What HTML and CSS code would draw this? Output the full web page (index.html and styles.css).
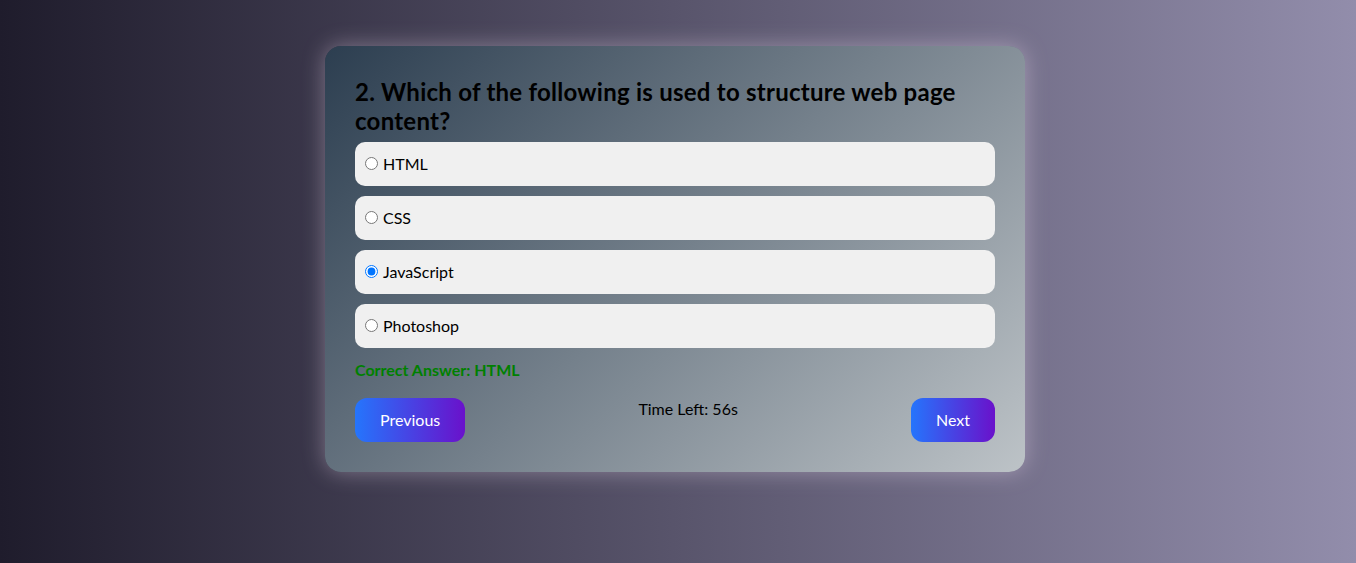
FILE: index.html
```html
<!DOCTYPE html>
<html lang="en">
<head>
<meta charset="utf-8">
<title>Quiz</title>
<link rel="stylesheet" href="styles.css">
</head>
<body>
<div class="quiz">
  <h2 class="question">2. Which of the following is used to structure web page content?</h2>
  <div class="options">
    <label class="option"><input type="radio" name="q"> HTML</label>
    <label class="option"><input type="radio" name="q"> CSS</label>
    <label class="option"><input type="radio" name="q" checked> JavaScript</label>
    <label class="option"><input type="radio" name="q"> Photoshop</label>
  </div>
  <p class="feedback">Correct Answer: HTML</p>
  <div class="controls">
    <button class="btn">Previous</button>
    <div class="timer">Time Left: 56s</div>
    <button class="btn">Next</button>
  </div>
</div>
</body>
</html>
```
FILE: styles.css
```css
html, body {
  margin: 0;
  height: 100%;
}
body {
  background: linear-gradient(to right, #1f1c2c, #928dab);
  font-family: "Segoe UI", Lato, "Noto Sans", sans-serif;
  padding: 46px 6px 0 0;
  box-sizing: border-box;
}
.quiz {
  width: 700px;
  box-sizing: border-box;
  margin: 0 auto;
  padding: 30px;
  border-radius: 16px;
  background: linear-gradient(135deg, #2c3e50, #bdc3c7);
  box-shadow: 0 0 22px rgba(255, 235, 255, 0.35);
}
.question {
  margin: 2px 0 6px;
  font-size: 24px;
  line-height: 28.8px;
  font-weight: 700;
  letter-spacing: 0.25px;
  color: #000;
}
.options {
  display: flex;
  flex-direction: column;
  gap: 10px;
}
.option {
  display: flex;
  align-items: center;
  height: 44px;
  box-sizing: border-box;
  padding: 0 10px;
  background: #f0f0f0;
  border-radius: 10px;
  font-size: 16px;
  color: #000;
}
.option input {
  margin: 0 5px 0 0;
  width: 13px;
  height: 13px;
}
.feedback {
  margin: 11px 0 18px;
  font-size: 16px;
  line-height: 21px;
  font-weight: 700;
  color: green;
}
.controls {
  display: flex;
  justify-content: space-between;
  align-items: flex-start;
}
.timer {
  font-size: 16px;
  line-height: 22px;
  color: #000;
}
.btn {
  border: none;
  height: 44px;
  padding: 0 25px;
  border-radius: 12px;
  background: linear-gradient(to right, #2575fc, #6a11cb);
  color: #fff;
  font-family: inherit;
  font-size: 16px;
}
```
